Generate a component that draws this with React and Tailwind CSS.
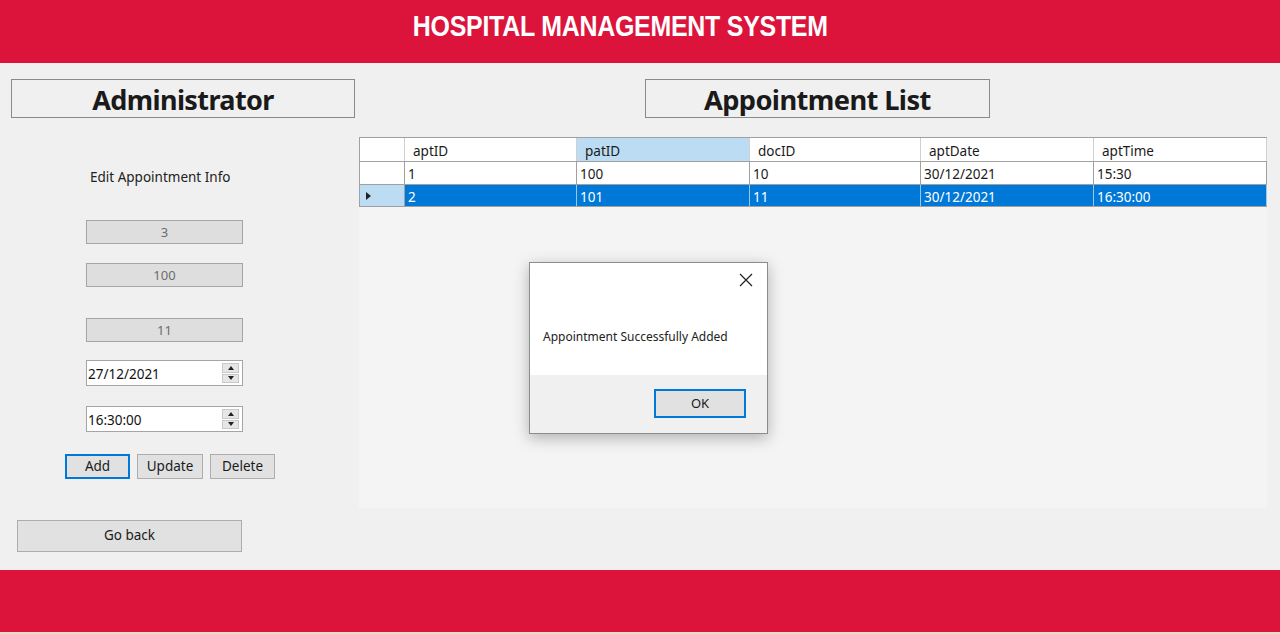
const rows = [
  { id: '1', pat: '100', doc: '10', date: '30/12/2021', time: '15:30' },
  { id: '2', pat: '101', doc: '11', date: '30/12/2021', time: '16:30:00', selected: true },
]

const cols = [
  { key: 'id', label: 'aptID', w: 'w-[172px]' },
  { key: 'pat', label: 'patID', w: 'w-[173px]', active: true },
  { key: 'doc', label: 'docID', w: 'w-[171px]' },
  { key: 'date', label: 'aptDate', w: 'w-[173px]' },
  { key: 'time', label: 'aptTime', w: 'w-[173px]' },
]

export default function App() {
  return (
    <div className="relative w-[1280px] h-[634px] flex flex-col bg-[#f0f0f0] overflow-hidden font-['Noto_Sans','Open_Sans',sans-serif] text-[#1a1a1a]">
      {/* Header */}
      <div className="h-[63px] bg-[#dc143c] flex items-center justify-center pb-[10px] shrink-0">
        <h1 className="mr-[40px] text-white font-bold text-[29px] tracking-[-0.3px] scale-x-[0.86] font-['Liberation_Sans',Arial,sans-serif]">
          HOSPITAL MANAGEMENT SYSTEM
        </h1>
      </div>

      {/* Body */}
      <div className="h-[507px] flex shrink-0">
        {/* Left panel */}
        <div className="w-[359px] shrink-0 flex flex-col pt-[16px]">
          <div className="ml-[11px] w-[344px] h-[39px] border border-[#8a8a8a] flex items-center justify-center pt-[4px]">
            <span className="font-bold text-[27px] scale-x-[1.0] tracking-[-0.6px]">Administrator</span>
          </div>

          <p className="ml-[90px] mt-[49px] text-[13.5px] leading-[20px] text-[#222]">Edit Appointment Info</p>

          <ReadOnlyBox className="mt-[33px]" value="3" />
          <ReadOnlyBox className="mt-[19px]" value="100" />
          <ReadOnlyBox className="mt-[31px]" value="11" />

          <Spinner className="mt-[18px]" value="27/12/2021" />
          <Spinner className="mt-[20px]" value="16:30:00" />

          <div className="ml-[65px] mt-[22px] flex gap-[7px]">
            <button className="w-[65px] h-[25px] bg-[#e1e1e1] border-2 border-[#0078d7] text-[13.5px] leading-none">Add</button>
            <button className="w-[66px] h-[25px] bg-[#e1e1e1] border border-[#adadad] text-[13.5px] leading-none">Update</button>
            <button className="w-[65px] h-[25px] bg-[#e1e1e1] border border-[#adadad] text-[13.5px] leading-none">Delete</button>
          </div>

          <button className="ml-[17px] mt-[41px] w-[225px] h-[32px] bg-[#e1e1e1] border border-[#adadad] text-[13.5px] leading-none">
            Go back
          </button>
        </div>

        {/* Right panel */}
        <div className="flex-1 flex flex-col pt-[16px]">
          <div className="ml-[286px] w-[345px] h-[39px] border border-[#8a8a8a] flex items-center justify-center pt-[4px]">
            <span className="font-bold text-[27px] scale-x-[1.01] tracking-[-0.6px]">Appointment List</span>
          </div>

          <div className="mt-[19px] w-[908px] h-[371px] bg-[#f4f4f4] border-t border-[#a0a0a0] text-[13.5px]">
            <div className="flex h-[24px] bg-white border-b border-[#a0a0a0]">
              <div className="w-[46px] border-r border-[#d0d0d0] border-l border-l-[#a0a0a0]" />
              {cols.map((c) => (
                <div
                  key={c.key}
                  className={`${c.w} h-full flex items-center pl-[8px] pt-[4px] border-r border-[#d0d0d0] ${c.active ? 'bg-[#bcdcf4]' : ''}`}
                >
                  {c.label}
                </div>
              ))}
            </div>
            {rows.map((r, i) => (
              <div key={r.id} className={`flex ${i === 0 ? 'h-[23px]' : 'h-[22px]'} border-b border-[#a0a0a0]`}>
                <div
                  className={`w-[46px] flex items-center pl-[6px] border-r border-[#a0a0a0] border-l border-l-[#a0a0a0] ${r.selected ? 'bg-[#bcdcf4]' : 'bg-white'}`}
                >
                  {r.selected && <span className="w-0 h-0 border-y-[4px] border-y-transparent border-l-[5px] border-l-[#222]" />}
                </div>
                {cols.map((c) => (
                  <div
                    key={c.key}
                    className={`${c.w} h-full flex items-center pl-[3px] pt-[3px] border-r ${r.selected ? 'bg-[#0078d7] text-white border-[#a0c4e4]' : 'bg-white border-[#a0a0a0]'}`}
                  >
                    {r[c.key]}
                  </div>
                ))}
              </div>
            ))}
          </div>
        </div>
      </div>

      {/* Footer */}
      <div className="h-[62px] bg-[#dc143c] shrink-0" />
      <div className="h-[2px] bg-[#e6dcc8] shrink-0" />

      {/* Message box */}
      <div className="absolute left-[529px] top-[262px] w-[239px] h-[172px] bg-white border border-[#8c8c8c] shadow-[0_4px_14px_rgba(0,0,0,0.28)] flex flex-col">
        <div className="h-[112px] relative">
          <svg className="absolute right-[14px] top-[10px]" width="14" height="14" viewBox="0 0 14 14" fill="none" stroke="#222" strokeWidth="1.2">
            <path d="M1 1 L13 13 M13 1 L1 13" />
          </svg>
          <p className="absolute left-[13px] top-[66px] text-[12px] leading-[16px] text-[#222]">Appointment Successfully Added</p>
        </div>
        <div className="flex-1 bg-[#f0f0f0] flex justify-end items-start pt-[14px] pr-[21px]">
          <button className="w-[92px] h-[29px] bg-[#e1e1e1] border-2 border-[#0078d7] text-[13px] leading-none">OK</button>
        </div>
      </div>
    </div>
  )
}

function ReadOnlyBox({ value, className = '' }) {
  return (
    <div className={`ml-[86px] w-[157px] h-[24px] bg-[#dedede] border border-[#a5a5a5] flex items-center justify-center pt-[2px] text-[13px] text-[#6d6d6d] ${className}`}>
      {value}
    </div>
  )
}

function Spinner({ value, className = '' }) {
  return (
    <div className={`ml-[86px] w-[157px] h-[26px] bg-white border border-[#a5a5a5] flex items-center ${className}`}>
      <span className="flex-1 pl-[1px] pt-[2px] text-[13.5px] text-[#111]">{value}</span>
      <div className="w-[17px] h-[20px] mr-[3px] flex flex-col gap-[1px]">
        <div className="flex-1 bg-[#e6e6e6] border border-[#c8c8c8] flex items-center justify-center">
          <span className="w-0 h-0 border-x-[3.5px] border-x-transparent border-b-[4px] border-b-[#222]" />
        </div>
        <div className="flex-1 bg-[#e6e6e6] border border-[#c8c8c8] flex items-center justify-center">
          <span className="w-0 h-0 border-x-[3.5px] border-x-transparent border-t-[4px] border-t-[#222]" />
        </div>
      </div>
    </div>
  )
}
